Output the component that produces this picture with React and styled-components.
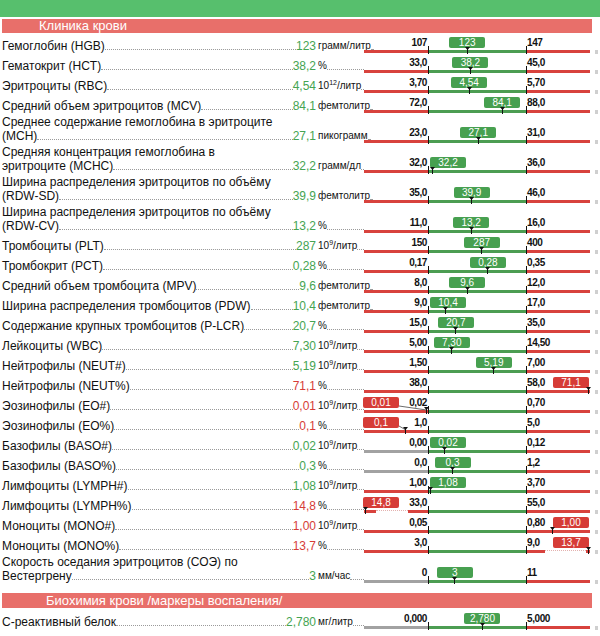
import React from 'react';
import styled, { createGlobalStyle } from 'styled-components';

const GlobalStyle = createGlobalStyle`
  body {
    margin: 0;
    background: #ffffff;
    font-family: "Liberation Sans", Arial, sans-serif;
    color: #111;
  }
`;

const TRACK = 226;
const LOW_X = 64;
const HIGH_X = 162;
const BADGE_W = 36;

const Page = styled.div`
  width: 600px;
  height: 636px;
  overflow: hidden;
`;

const TopBar = styled.div`
  height: 17px;
  background: #57bf6d;
  margin-bottom: 2px;
`;

const SectionTitle = styled.div`
  margin: ${p => p.$top}px 8px ${p => p.$bottom}px 2px;
  height: ${p => p.$h}px;
  line-height: ${p => p.$h}px;
  padding-left: ${p => p.$indent}px;
  background: #e86f6a;
  color: #fff;
  font-size: 13px;
`;

const Row = styled.div`
  display: flex;
  align-items: flex-end;
  height: ${p => (p.$tall ? 30 : 20)}px;
  padding-left: 2px;
`;

const LabelCell = styled.div`
  width: 314px;
  flex: none;
  font-size: 12px;
  line-height: 14px;
  padding-bottom: 2px;
`;

const LastLine = styled.div`
  display: flex;
  align-items: flex-end;
  white-space: nowrap;
`;

const Leader = styled.span`
  flex: 1;
  min-width: 2px;
  margin-bottom: 3px;
  border-bottom: 1px dotted #9a9a9a;
`;

const Value = styled.span`
  color: ${p => (p.$bad ? '#d63c37' : '#45a452')};
`;

const UnitCell = styled.div`
  width: 46px;
  flex: none;
  margin-left: 2px;
  padding-bottom: 2px;
  display: flex;
  align-items: flex-end;
  font-size: 10px;
  line-height: 14px;
  white-space: nowrap;

  sup {
    font-size: 7px;
    line-height: 0;
    vertical-align: 4px;
  }
`;

const Gauge = styled.div`
  position: relative;
  width: ${TRACK}px;
  height: 20px;
  flex: none;
  display: flex;
  flex-direction: column;
  justify-content: flex-end;
  padding-bottom: 2px;
  box-sizing: border-box;
`;

const Track = styled.div`
  display: flex;
  height: 3px;
`;

const Segment = styled.div`
  width: ${p => p.$w}px;
  background: ${p => p.$color};
`;

const Tick = styled.div`
  position: absolute;
  top: 11px;
  width: 1px;
  height: 8px;
  background: #111;
`;

const RefLabel = styled.span`
  position: absolute;
  top: 3px;
  font-size: 10px;
  font-weight: bold;
  letter-spacing: -0.4px;
  line-height: 10px;
  color: #111;
`;

const Badge = styled.div`
  position: absolute;
  top: 2px;
  width: ${BADGE_W}px;
  height: 11px;
  border-radius: 2px;
  background: ${p => (p.$bad ? '#d63c37' : '#47a050')};
  color: #fff;
  font-size: 10px;
  line-height: 11px;
  text-align: center;
`;

const Marker = styled.svg`
  position: absolute;
  top: 12px;
  width: 5px;
  height: 7px;
`;

const Overlay = styled.svg`
  position: absolute;
  left: 0;
  top: 0;
  pointer-events: none;
`;

const Gap = styled.div`
  position: absolute;
  bottom: 2px;
  height: 3px;
  background: #fff;
  border-top: 1px dotted #e3b1af;
  box-sizing: border-box;
`;

const Stub = styled.div`
  width: 3px;
  height: 4px;
  margin-left: 5px;
  margin-bottom: 1px;
  background: #cfcfcf;
  flex: none;
`;

const num = s => parseFloat(String(s).replace(',', '.'));

const Unit = ({ text }) => {
  const m = text.match(/^10(\d+)(\/.*)$/);
  if (m) {
    return (
      <span>
        10<sup>{m[1]}</sup>
        {m[2]}
      </span>
    );
  }
  return <span>{text}</span>;
};

const Meter = ({ value, low, high, greyLow, gap }) => {
  const v = num(value);
  const lo = num(low);
  const hi = num(high);
  const raw = LOW_X + ((v - lo) * (HIGH_X - LOW_X)) / (hi - lo);
  const pos = Math.max(0, Math.min(TRACK, raw));
  const bad = v < lo || v > hi;

  let badgeLeft;
  if (v < lo) badgeLeft = -1;
  else if (v > hi) badgeLeft = TRACK - BADGE_W - 1;
  else badgeLeft = Math.max(LOW_X + 2, Math.min(HIGH_X - BADGE_W, pos - BADGE_W / 2));

  const markerLeft = Math.max(-1, Math.min(TRACK - 4, pos - 2.5));
  const showLink = v < lo && pos > badgeLeft + BADGE_W + 2;

  return (
    <Gauge>
      <Track>
        <Segment $w={LOW_X} $color={greyLow ? '#a2a2a2' : '#d8423d'} />
        <Segment $w={HIGH_X - LOW_X} $color="#4c9d52" />
        <Segment $w={TRACK - HIGH_X} $color="#d8423d" />
      </Track>
      {gap && <Gap style={{ left: gap[0], width: gap[1] - gap[0] }} />}
      <Tick style={{ left: LOW_X }} />
      <Tick style={{ left: HIGH_X }} />
      <RefLabel style={{ right: TRACK - LOW_X + 1 }}>{low}</RefLabel>
      <RefLabel style={{ left: HIGH_X + 1 }}>{high}</RefLabel>
      {showLink && (
        <Overlay width={TRACK} height={20}>
          <line
            x1={badgeLeft + BADGE_W}
            y1={11}
            x2={pos}
            y2={15}
            stroke="#6d6d6d"
            strokeWidth="1"
          />
        </Overlay>
      )}
      <Badge $bad={bad} style={{ left: badgeLeft }}>
        {value}
      </Badge>
      <Marker viewBox="0 0 5 7" style={{ left: markerLeft }}>
        <path d="M0 0 H5 L3 2.5 V7 H2 V2.5 Z" fill="#111" />
      </Marker>
    </Gauge>
  );
};

const Item = ({ item }) => {
  const lines = item.label.split('\n');
  const bad = num(item.value) < num(item.low) || num(item.value) > num(item.high);
  return (
    <Row $tall={lines.length > 1}>
      <LabelCell>
        {lines.length > 1 && <div>{lines[0]}</div>}
        <LastLine>
          <span>{lines[lines.length - 1]}</span>
          <Leader />
          <Value $bad={bad}>{item.value}</Value>
        </LastLine>
      </LabelCell>
      <UnitCell>
        <Unit text={item.unit} />
        <Leader />
      </UnitCell>
      <Meter {...item} />
      <Stub />
    </Row>
  );
};

const blood = [
  { label: 'Гемоглобин (HGB)', value: '123', unit: 'грамм/литр', low: '107', high: '147' },
  { label: 'Гематокрит (HCT)', value: '38,2', unit: '%', low: '33,0', high: '45,0' },
  { label: 'Эритроциты (RBC)', value: '4,54', unit: '1012/литр', low: '3,70', high: '5,70' },
  { label: 'Средний объем эритроцитов (MCV)', value: '84,1', unit: 'фемтолитр', low: '72,0', high: '88,0' },
  { label: 'Среднее содержание гемоглобина в эритроците\n(MCH)', value: '27,1', unit: 'пикограмм', low: '23,0', high: '31,0' },
  { label: 'Средняя концентрация гемоглобина в\nэритроците (MCHC)', value: '32,2', unit: 'грамм/дл', low: '32,0', high: '36,0' },
  { label: 'Ширина распределения эритроцитов по объёму\n(RDW-SD)', value: '39,9', unit: 'фемтолитр', low: '35,0', high: '46,0' },
  { label: 'Ширина распределения эритроцитов по объёму\n(RDW-CV)', value: '13,2', unit: '%', low: '11,0', high: '16,0' },
  { label: 'Тромбоциты (PLT)', value: '287', unit: '109/литр', low: '150', high: '400' },
  { label: 'Тромбокрит (PCT)', value: '0,28', unit: '%', low: '0,17', high: '0,35' },
  { label: 'Средний объем тромбоцита (MPV)', value: '9,6', unit: 'фемтолитр', low: '8,0', high: '12,0' },
  { label: 'Ширина распределения тромбоцитов (PDW)', value: '10,4', unit: 'фемтолитр', low: '9,0', high: '17,0' },
  { label: 'Содержание крупных тромбоцитов (P-LCR)', value: '20,7', unit: '%', low: '15,0', high: '35,0' },
  { label: 'Лейкоциты (WBC)', value: '7,30', unit: '109/литр', low: '5,00', high: '14,50' },
  { label: 'Нейтрофилы (NEUT#)', value: '5,19', unit: '109/литр', low: '1,50', high: '7,00' },
  { label: 'Нейтрофилы (NEUT%)', value: '71,1', unit: '%', low: '38,0', high: '58,0' },
  { label: 'Эозинофилы (EO#)', value: '0,01', unit: '109/литр', low: '0,02', high: '0,70' },
  { label: 'Эозинофилы (EO%)', value: '0,1', unit: '%', low: '1,0', high: '5,0' },
  { label: 'Базофилы (BASO#)', value: '0,02', unit: '109/литр', low: '0,00', high: '0,12', greyLow: true },
  { label: 'Базофилы (BASO%)', value: '0,3', unit: '%', low: '0,0', high: '1,2', greyLow: true },
  { label: 'Лимфоциты (LYMPH#)', value: '1,08', unit: '109/литр', low: '1,00', high: '3,70' },
  { label: 'Лимфоциты (LYMPH%)', value: '14,8', unit: '%', low: '33,0', high: '55,0', gap: [12, 44] },
  { label: 'Моноциты (MONO#)', value: '1,00', unit: '109/литр', low: '0,05', high: '0,80' },
  { label: 'Моноциты (MONO%)', value: '13,7', unit: '%', low: '3,0', high: '9,0', gap: [181, 222] },
  { label: 'Скорость оседания эритроцитов (СОЭ) по\nВестергрену', value: '3', unit: 'мм/час', low: '0', high: '11', greyLow: true },
];

const inflammation = [
  { label: 'С-реактивный белок', value: '2,780', unit: 'мг/литр', low: '0,000', high: '5,000', greyLow: true },
];

export default function App() {
  return (
    <Page>
      <GlobalStyle />
      <TopBar />
      <SectionTitle $top={0} $bottom={2} $h={14} $indent={37}>
        Клиника крови
      </SectionTitle>
      {blood.map(item => (
        <Item key={item.label} item={item} />
      ))}
      <SectionTitle $top={8} $bottom={3} $h={15} $indent={44}>
        Биохимия крови /маркеры воспаления/
      </SectionTitle>
      {inflammation.map(item => (
        <Item key={item.label} item={item} />
      ))}
    </Page>
  );
}
